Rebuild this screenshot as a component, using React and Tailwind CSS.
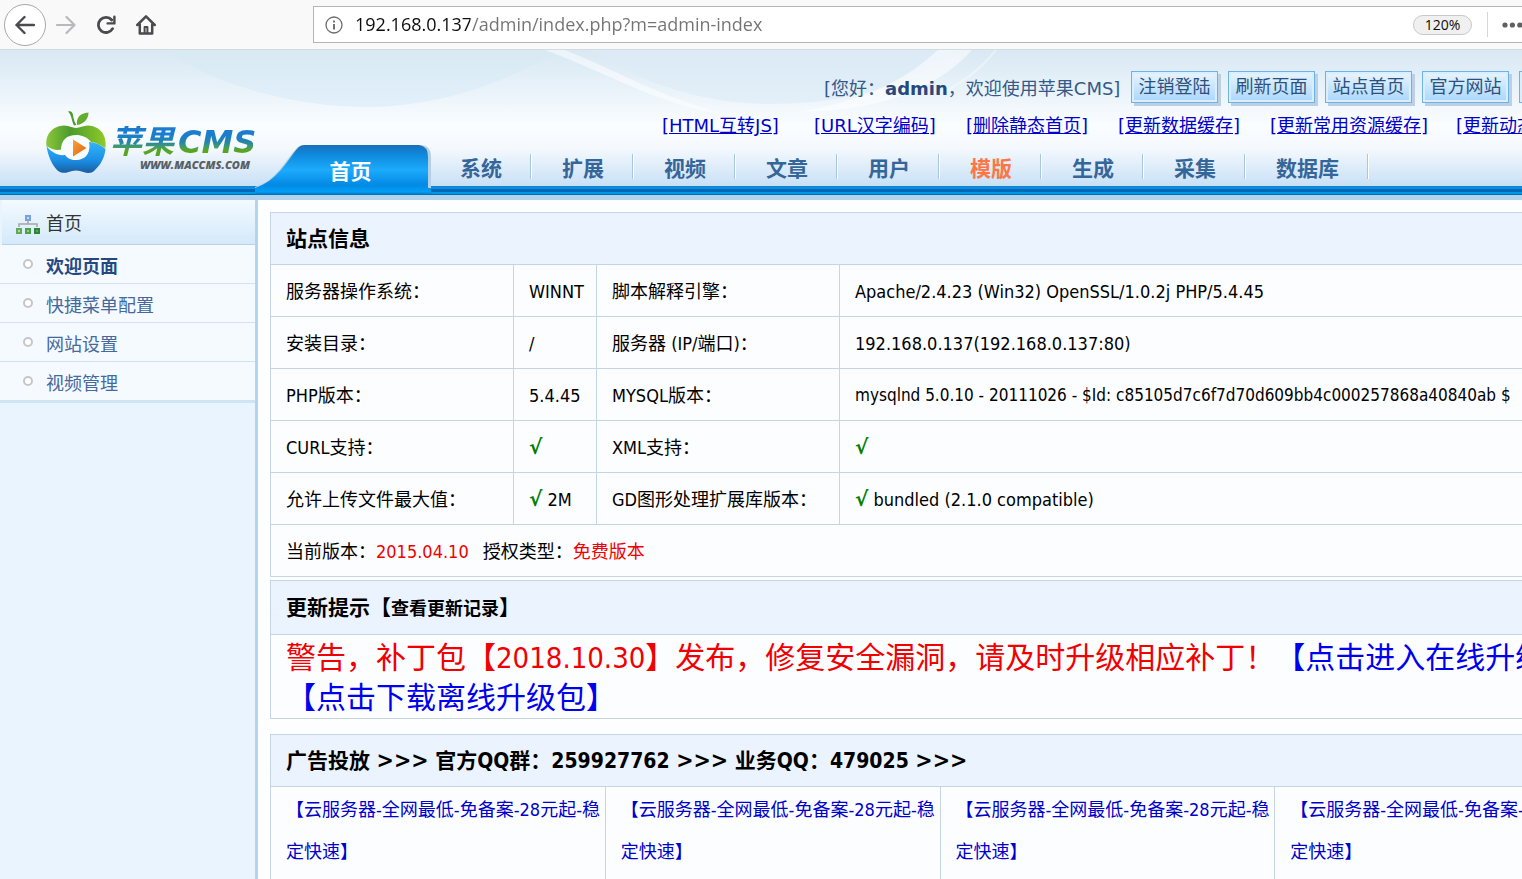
import React, { useState } from 'react';

const quickButtons = ['注销登陆', '刷新页面', '站点首页', '官方网站', '官方论坛'];

const toolLinks = [
  '[HTML互转JS]',
  '[URL汉字编码]',
  '[删除静态首页]',
  '[更新数据缓存]',
  '[更新常用资源缓存]',
  '[更新动态缓存]',
];

const navItems = [
  { name: '系统' },
  { name: '扩展' },
  { name: '视频' },
  { name: '文章' },
  { name: '用户' },
  { name: '模版', hot: true },
  { name: '生成' },
  { name: '采集' },
  { name: '数据库' },
];

const menuItems = ['欢迎页面', '快捷菜单配置', '网站设置', '视频管理'];

const serverRows = [
  ['服务器操作系统：', 'WINNT', '脚本解释引擎：', 'Apache/2.4.23 (Win32) OpenSSL/1.0.2j PHP/5.4.45'],
  ['安装目录：', '/', '服务器 (IP/端口)：', '192.168.0.137(192.168.0.137:80)'],
  ['PHP版本：', '5.4.45', 'MYSQL版本：', 'mysqlnd 5.0.10 - 20111026 - $Id: c85105d7c6f7d70d609bb4c000257868a40840ab $'],
  ['CURL支持：', '√', 'XML支持：', '√'],
  ['允许上传文件最大值：', '√ 2M', 'GD图形处理扩展库版本：', '√ bundled (2.1.0 compatible)'],
];

const ads = Array(4).fill('【云服务器-全网最低-免备案-28元起-稳定快速】');

const BrowserBar = () => {
  const [url, setUrl] = useState('192.168.0.137/admin/index.php?m=admin-index');

  return (
    <div className="flex h-[50px] items-center overflow-hidden border-b border-[#d3dbe1] bg-[#f9f9fa] pl-1">
      <button aria-label="后退" className="flex size-[42px] shrink-0 items-center justify-center rounded-full border border-[#a9a9ab] bg-white">
        <svg viewBox="0 0 20 20" className="size-5" fill="none" stroke="#4a4a4f" strokeWidth="2.4" strokeLinecap="round" strokeLinejoin="round">
          <path d="M19 10H1.5M9.5 2L1.5 10l8 8" />
        </svg>
      </button>
      <button aria-label="前进" className="ml-2.5 shrink-0">
        <svg viewBox="0 0 20 20" className="size-5" fill="none" stroke="#b9b9bc" strokeWidth="2.2" strokeLinecap="round" strokeLinejoin="round">
          <path d="M1 10h17.5M10.5 2l8 8-8 8" />
        </svg>
      </button>
      <button aria-label="刷新" className="ml-5 shrink-0">
        <svg viewBox="0 0 20 20" className="size-5" fill="none" stroke="#4a4a4f" strokeWidth="2.8" strokeLinecap="round">
          <path d="M16.6 13.6A7.6 7.6 0 1 1 15.8 5" />
          <path d="M18.4 1.6v6.8h-6.8" strokeWidth="2.4" strokeLinejoin="round" />
        </svg>
      </button>
      <button aria-label="主页" className="ml-5 shrink-0">
        <svg viewBox="0 0 20 20" className="size-5" fill="none" stroke="#4a4a4f" strokeWidth="2.5" strokeLinecap="round" strokeLinejoin="round">
          <path d="M1.3 10L10 1.4l8.7 8.6M3.8 9.5v9h12.4v-9" />
          <path d="M8.6 18v-6h2.8v6" strokeWidth="2" />
        </svg>
      </button>

      <div className="ml-[157px] flex h-[37px] flex-1 items-center border border-r-0 border-[#b5b5b5] bg-white pl-[11px]">
        <svg viewBox="0 0 18 18" className="size-[18px] shrink-0" fill="none" stroke="#6d6d6f" strokeWidth="1.3">
          <circle cx="9" cy="9" r="8" />
          <path d="M9 8v5.5M9 4.5v2" strokeWidth="1.9" />
        </svg>
        <input
          aria-label="地址"
          value={url}
          onChange={(e) => setUrl(e.target.value)}
          className="ml-3 min-w-0 flex-1 bg-[linear-gradient(90deg,#0c0c0d_115px,#737373_115px)] bg-clip-text font-['Open_Sans','Noto_Sans_CJK_SC',sans-serif] text-[18px] text-transparent outline-none"
        />
        <button className="h-5 w-[59px] shrink-0 rounded-full border border-[#c9c9c9] bg-[#f0f0f1] font-['Open_Sans',sans-serif] text-[14px] leading-[18px] text-[#0c0c0d]">
          120%
        </button>
        <span className="ml-[15px] h-[25px] w-px shrink-0 bg-[#d7d7db]" />
        <button aria-label="页面操作" className="ml-[14px] w-5 shrink-0">
          <svg viewBox="0 0 20 6" className="h-[6px] w-5" fill="#606064">
            <circle cx="3" cy="3" r="2.6" />
            <circle cx="10.4" cy="3" r="2.6" />
            <circle cx="17.8" cy="3" r="2.6" />
          </svg>
        </button>
      </div>
    </div>
  );
};

const Logo = () => (
  <a href="#home" className="flex w-[255px] shrink-0 items-start pt-[60px] pl-[45px]">
    <svg viewBox="0 0 62 64" className="h-16 w-[62px] shrink-0">
      <defs>
        <linearGradient id="appleGreen" x1="0" y1="0" x2="1" y2="0">
          <stop offset="0" stopColor="#8cc63a" />
          <stop offset="0.4" stopColor="#4b9b2d" />
          <stop offset="1" stopColor="#8fca28" />
        </linearGradient>
        <linearGradient id="appleBlue" x1="0" y1="0" x2="0" y2="1">
          <stop offset="0" stopColor="#35b4f5" />
          <stop offset="0.6" stopColor="#1a8ee6" />
          <stop offset="1" stopColor="#1b5d9e" />
        </linearGradient>
        <linearGradient id="play" x1="0" y1="0" x2="1" y2="1">
          <stop offset="0" stopColor="#f9a13a" />
          <stop offset="1" stopColor="#dd6410" />
        </linearGradient>
      </defs>
      <path d="M23 1.5C26 .5 27.5 2 28 5c.5 4 1.500 7 3.500 10l-2.500.5C26.500 11 27 5.500 23 1.500z" fill="#4f9a31" />
      <path d="M32 15C31 8 35 3 43.500 2.500 43.500 9 39 14 32 15z" fill="#62ad2d" />
      <path d="M1.500 36C0 24 8 16 19 15.500c5 0 8 2.500 12 2.500s7-2.500 12-2.500C55 16 62 25 60.500 38 55 35 50 32 46 32c-4-5-9-7-15-7-9 0-15 5-15 15C10 41 4 39 1.500 36z" fill="url(#appleGreen)" />
      <path d="M1.500 36C7 42 14 45 20 44c4 6 10 7 15 5 7-2 11-9 9-17 6 0 12 3 16.500 7-1 9-5 16-11 21.500-3 3-7 3-11 1.500-5-2-10-2-15 0-4 1.500-8 1-11-1.500C7 55 3 46 1.500 36z" fill="url(#appleBlue)" />
      <path d="M1.500 36c6 4 11 5 16 3-1-8 5-13 13-13 9 0 14 6 13.500 13S38 50 31 50c-5 0-9-2-11-5-7 1-14-3-18.500-9z" fill="#f8fcff" />
      <path d="M28 29.500L41.500 38 28 46.500z" fill="url(#play)" />
    </svg>
    <span className="ml-[3px] flex flex-col items-start pt-4 whitespace-nowrap">
      <span className="flex items-center gap-1 bg-linear-to-b from-[#1b7cd0] from-25% via-[#2485a8] via-50% to-[#58a51f] to-75% bg-clip-text pr-1 font-['DejaVu_Sans','Noto_Sans_CJK_SC',sans-serif] text-[32px] leading-[32px] font-bold text-transparent italic">
        <span>苹果</span>
        <span>CMS</span>
      </span>
      <span className="mt-px ml-[30px] font-['Open_Sans',sans-serif] text-[11px] leading-3 font-extrabold text-[#5a5f64] italic">
        WWW.MACCMS.COM
      </span>
    </span>
  </a>
);

const HeaderBackdrop = () => (
  <svg viewBox="0 0 1522 150" preserveAspectRatio="none" className="absolute inset-0 size-full">
    <defs>
      <linearGradient id="sky" x1="0" y1="0" x2="0" y2="1">
        <stop offset="0" stopColor="#d9e8f3" />
        <stop offset="0.25" stopColor="#e8f2f9" />
        <stop offset="0.5" stopColor="#fbfdff" />
        <stop offset="0.65" stopColor="#f5f9fe" />
        <stop offset="0.9" stopColor="#c9e1f6" />
      </linearGradient>
      <linearGradient id="swoop" x1="0" y1="0" x2="0" y2="1">
        <stop offset="0" stopColor="#d8e9f4" />
        <stop offset="1" stopColor="#e2f0fa" />
      </linearGradient>
    </defs>
    <rect width="1522" height="150" fill="url(#sky)" />
    <path d="M165 0C220 40 310 58 370 57 450 56 520 25 560 0z" fill="url(#swoop)" />
    <path d="M590 0C650 38 710 54 770 54 850 54 910 35 955 0z" fill="#dcebf6" opacity="0.6" />
    <path d="M565 0C620 22 670 52 740 68L700 60C640 45 600 20 545 0z" fill="#fff" opacity="0.5" />
    <path d="M938 0C900 35 860 50 800 62 890 60 940 35 972 0z" fill="#fff" opacity="0.55" />
    <path d="M996 0C980 20 965 30 945 42" fill="none" stroke="#fff" strokeWidth="2" opacity="0.4" />
  </svg>
);

const Header = () => (
  <header className="relative flex h-[150px] overflow-hidden font-['DejaVu_Sans','Noto_Sans_CJK_SC',sans-serif]">
    <HeaderBackdrop />
    <div className="absolute inset-x-0 bottom-0 h-[14px] border-b-[5px] border-[#b3d3ea] bg-[linear-gradient(#1a80cc_0_1px,#0a8fde_1px_3px,#0068b8_3px_6px,#0098e6_6px_8px,#0766b0_8px)]" />
    <div className="relative flex min-w-0 flex-1">
      <Logo />
      <div className="flex flex-col pt-5 whitespace-nowrap">
        <div className="flex h-9 items-start gap-2.5 pl-[569px]">
          <p className="mr-auto min-w-[297px] pt-[7px] text-[18px] leading-6 text-[#34598a]">
            [您好：<b className="text-[#27487a]">admin</b>，欢迎使用苹果CMS]
          </p>
          {quickButtons.map((name) => (
            <button
              key={name}
              className="mt-px h-8 w-[87px] shrink-0 border border-[#6db3ea] bg-linear-to-b from-[#e9f5fe] to-[#a9d6fa] text-[18px] leading-7 text-[#2c5180] shadow-[inset_0_0_0_2px_#d9effe,3px_3px_0_#bdcfe2]"
            >
              {name}
            </button>
          ))}
        </div>
        <div className="flex h-[39px] items-center gap-7 pt-px pl-[407px]">
          {toolLinks.map((name) => (
            <a key={name} href="#tool" className="min-w-[124px] text-[18px] leading-6 text-[#0000cc] underline">
              {name}
            </a>
          ))}
        </div>
        <nav className="flex h-[50px] items-start text-[21px] font-bold">
          <a href="#home" className="relative flex h-[50px] w-[175px] shrink-0 items-center justify-center pt-1.5 pl-4 text-white">
            <svg viewBox="0 0 178 50" className="absolute inset-y-0 left-0 h-[50px] w-[178px] max-w-none">
              <defs>
                <linearGradient id="tab" x1="0" y1="0" x2="0" y2="1">
                  <stop offset="0" stopColor="#1a6fb8" />
                  <stop offset="0.2" stopColor="#0f8ade" />
                  <stop offset="0.5" stopColor="#1cabfb" />
                  <stop offset="0.8" stopColor="#0289e4" />
                  <stop offset="0.94" stopColor="#009ff5" />
                  <stop offset="1" stopColor="#0867b2" />
                </linearGradient>
              </defs>
              <path d="M0 42C22 35 30 16 40 5q4-5 9-5h116q11 0 11 12v31H0z" fill="#b5cfe4" />
              <path d="M0 43C22 36 32 16 42 4q3-4 8-4h114q9 1 9 12v31h3v7H0z" fill="url(#tab)" />
            </svg>
            <span className="relative">首页</span>
          </a>
          {navItems.map((item) => (
            <a
              key={item.name}
              href="#nav"
              className={`flex h-[41px] items-center px-[30px] pt-2 bg-[linear-gradient(#a9c7dc,#a9c7dc),linear-gradient(#fff,#fff)] bg-[length:1px_25px,2px_25px] bg-[position:calc(100%_-_1px)_9px,100%_9px] bg-no-repeat ${
                item.hot ? 'text-[#ff7646]' : 'text-[#35669a]'
              }`}
            >
              {item.name}
            </a>
          ))}
        </nav>
      </div>
    </div>
  </header>
);

const Sidebar = () => (
  <aside className="w-[258px] shrink-0 border-r-[3px] border-[#b5d5ee] bg-[#eaf4ff] text-[18px]">
    <h2 className="ml-0.5 flex h-[45px] items-center gap-1.5 border-b border-[#b5d5ee] bg-linear-to-b from-[#f3faff] to-[#d4e9fa] pt-0.5 pl-[14px] text-[#333]">
      <svg viewBox="0 0 24 22" className="mt-1 size-6">
        <path d="M12 6v4M3 13v-3h18v3" fill="none" stroke="#a5a5a5" strokeWidth="1.5" />
        <rect x="9" y="1" width="6" height="6" fill="#7aa3dc" />
        <rect x="11" y="3" width="2" height="2" fill="#c5dbf8" />
        <rect x="0" y="14" width="6" height="6" fill="#5fab58" />
        <rect x="9" y="14" width="6" height="6" fill="#4fa04a" />
        <rect x="18" y="14" width="6" height="6" fill="#2f8534" />
        <rect x="2" y="16" width="2" height="2" fill="#a9dc9c" />
        <rect x="11" y="16" width="2" height="2" fill="#93cd88" />
        <rect x="20" y="16" width="2" height="2" fill="#57a655" />
      </svg>
      首页
    </h2>
    <ul className="border-b-2 border-[#cfe5f5]">
      {menuItems.map((name, index) => (
        <li key={name} className="flex h-[39px] items-center border-b border-[#cfe3f3] bg-[#f4faff] pt-1 pl-[23px]">
          <span className="mb-1 size-[10px] rounded-full border-2 border-[#c6c6c6] bg-white" />
          <a
            href="#menu"
            className={`ml-[13px] ${index === 0 ? 'font-bold text-[#27487f]' : 'text-[#46699c]'}`}
          >
            {name}
          </a>
        </li>
      ))}
    </ul>
  </aside>
);

// Ô giá trị: dấu √ tô xanh, phần còn lại giữ nguyên
const Value = ({ text }) => {
  if (!text.startsWith('√')) return text;
  return (
    <>
      <b className="font-['DejaVu_Sans',sans-serif] text-[20px] leading-6 text-[#008000]">√</b>
      {text.slice(1)}
    </>
  );
};

const tableClass = 'w-full table-fixed border-collapse bg-[#fcfdff] text-left';
const headClass = 'border border-[#c5d5e6] bg-[#ebf3ff] px-[15px] pt-[3px] text-[21px] font-bold';
const cellClass = 'border border-[#c5d5e6] px-[15px] pt-0.5';

const SiteInfo = () => (
  <table className={tableClass}>
    <colgroup>
      <col className="w-[243px]" />
      <col className="w-[83px]" />
      <col className="w-[243px]" />
      <col />
    </colgroup>
    <thead>
      <tr className="h-[52px]">
        <th colSpan={4} className={headClass}>站点信息</th>
      </tr>
    </thead>
    <tbody>
      {serverRows.map(([labelA, valueA, labelB, valueB]) => (
        <tr key={labelA} className="h-[52px] whitespace-nowrap">
          <td className={cellClass}>{labelA}</td>
          <td className={`${cellClass} pr-0`}><Value text={valueA} /></td>
          <td className={cellClass}>{labelB}</td>
          <td className={`${cellClass} ${valueB.length > 60 ? 'text-[17px]' : ''}`}><Value text={valueB} /></td>
        </tr>
      ))}
      <tr className="h-[52px]">
        <td colSpan={4} className={cellClass}>
          当前版本：<span className="text-[#f00000]">2015.04.10</span>
          <span className="ml-[14px]">授权类型：</span>
          <span className="text-[#f00000]">免费版本</span>
        </td>
      </tr>
    </tbody>
  </table>
);

const UpdateNotice = () => (
  <table className={`${tableClass} mt-[3px]`}>
    <thead>
      <tr className="h-[54px]">
        <th className={headClass}>
          更新提示【<a href="#log" className="text-[18px]">查看更新记录</a>】
        </th>
      </tr>
    </thead>
    <tbody>
      <tr className="h-[84px]">
        <td className={`${cellClass} text-[30px] leading-10 whitespace-nowrap`}>
          <span className="text-[#f00000]">
            警告，补丁包【<span className="text-[29px]">2018.10.30</span>】发布，修复安全漏洞，请及时升级相应补丁！
          </span>
          <a href="#online" className="text-[#0000ee]">【点击进入在线升级】</a>
          <br />
          <a href="#offline" className="text-[#0000ee]">【点击下载离线升级包】</a>
        </td>
      </tr>
    </tbody>
  </table>
);

const Arrows = () => <span className="text-[23px] leading-7">&gt;&gt;&gt;</span>;

const AdTable = () => (
  <table className={`${tableClass} mt-[15px]`}>
    <thead>
      <tr className="h-[52px]">
        <th colSpan={4} className={headClass}>
          广告投放 <Arrows /> 官方QQ群：259927762 <Arrows /> 业务QQ：479025 <Arrows />
        </th>
      </tr>
    </thead>
    <tbody>
      <tr className="h-[104px]">
        {ads.map((ad, index) => (
          <td key={index} className={`${cellClass} pr-0 align-top leading-[42px]`}>
            <a href="#ad" className="text-[#0000cc]">{ad}</a>
          </td>
        ))}
      </tr>
    </tbody>
  </table>
);

const App = () => (
  <div className="flex h-screen flex-col overflow-hidden bg-[#fcfeff] font-['DejaVu_Sans_Condensed','DejaVu_Sans','Noto_Sans_CJK_SC',sans-serif]">
    <BrowserBar />
    <Header />
    <div className="flex min-h-0 flex-1">
      <Sidebar />
      <main className="min-w-0 flex-1 overflow-hidden pt-3 pl-3 text-[18px] text-black">
        <div className="min-w-[1340px]">
          <SiteInfo />
          <UpdateNotice />
          <AdTable />
        </div>
      </main>
    </div>
  </div>
);

export default App;
